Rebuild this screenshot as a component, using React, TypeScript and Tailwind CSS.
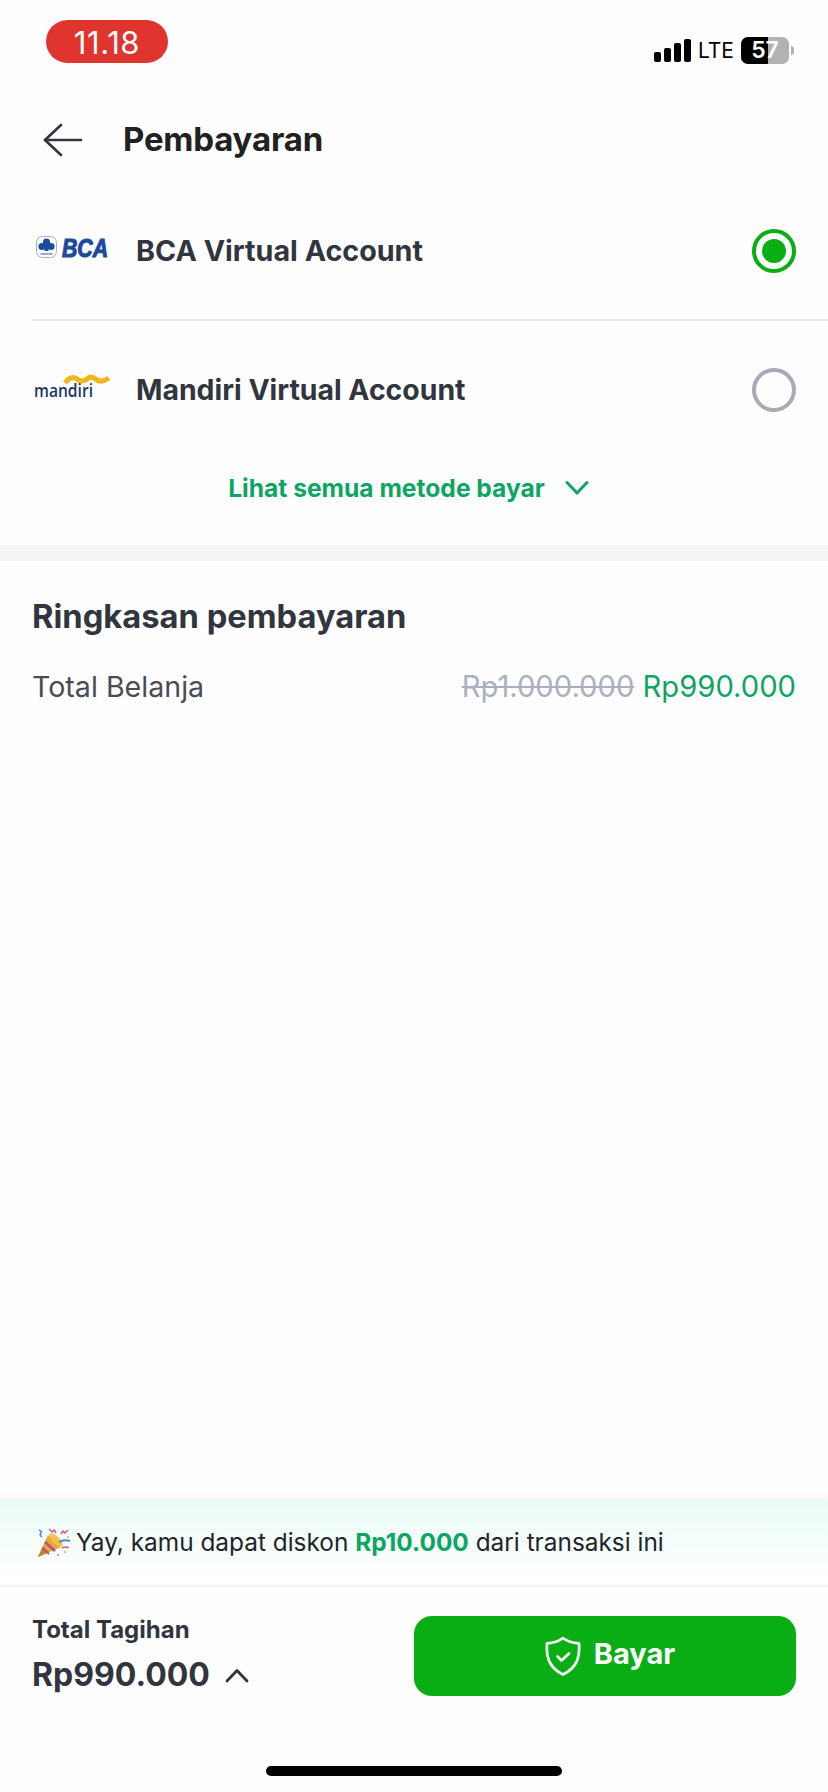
function BcaLogo() {
  return (
    <svg width="82" height="36" viewBox="0 0 82 36" className="block shrink-0">
      <g transform="translate(0 3)">
        <rect x="4.5" y="0.5" width="20" height="21" rx="6" fill="#fff" stroke="#9fb0d2" strokeWidth="1" />
        <circle cx="14.5" cy="6" r="3.6" fill="#1c4a9c" />
        <circle cx="10" cy="10.5" r="3.6" fill="#1c4a9c" />
        <circle cx="19" cy="10.5" r="3.6" fill="#1c4a9c" />
        <rect x="12.5" y="8" width="4" height="7" fill="#1c4a9c" />
        <rect x="8.5" y="17" width="12" height="1.8" fill="#8ea3c9" />
      </g>
      <text transform="translate(30 24) scale(0.85 1)" fontFamily="'Liberation Sans', sans-serif" fontSize="25" fontWeight="700" fontStyle="italic" fill="#1c4a9c" stroke="#1c4a9c" strokeWidth="1.1">BCA</text>
    </svg>
  );
}

function MandiriLogo() {
  return (
    <svg width="78" height="36" viewBox="0 0 78 36" className="block shrink-0">
      <path d="M33 11 Q39 3 45 7 Q50 11 55 7 Q60 3 65 8 Q70 11 77 6" fill="none" stroke="#f5b51c" strokeWidth="5" />
      <text x="2" y="25" fontFamily="'Open Sans', sans-serif" fontSize="18" fontWeight="600" fill="#1a3668" textLength="59" lengthAdjust="spacingAndGlyphs">mandiri</text>
    </svg>
  );
}

function PartyPopper() {
  return (
    <svg width="34" height="32" viewBox="0 0 34 32" className="block shrink-0">
      <path d="M1 30 L11 8 L24 20 Z" fill="#e8a92c" />
      <path d="M1 30 L6 19 L12 25 Z" fill="#c9821f" />
      <path d="M8 15 L18 24" stroke="#b04fa0" strokeWidth="2.5" />
      <path d="M5 21 L12 27" stroke="#b04fa0" strokeWidth="2" />
      <ellipse cx="19" cy="13" rx="3.5" ry="9" transform="rotate(-45 19 13)" fill="#f2c14e" />
      <path d="M2 3 q3 1 2 3 q-2 2 1 4" fill="none" stroke="#4a86d8" strokeWidth="1.5" />
      <path d="M12 2 l3 3 l2 -2 l2 3" fill="none" stroke="#c45aa8" strokeWidth="1.5" />
      <path d="M24 7 l2 -3 l2 2 l3 -3" fill="none" stroke="#d85a78" strokeWidth="1.5" />
      <path d="M22 15 q5 -3 11 -1" fill="none" stroke="#4a86d8" strokeWidth="2" />
      <path d="M25 21 q4 -2 7 0" fill="none" stroke="#c45aa8" strokeWidth="1.5" />
      <circle cx="28" cy="25" r="1" fill="#e8a92c" />
      <circle cx="21" cy="28" r="1" fill="#e07aa0" />
      <circle cx="31" cy="10" r="1" fill="#e8a92c" />
    </svg>
  );
}

function ShieldCheck() {
  return (
    <svg width="38" height="40" viewBox="0 0 38 40" fill="none" stroke="#f2fbf2" strokeWidth="2.8" strokeLinecap="round" strokeLinejoin="round" className="block shrink-0">
      <path d="M19 2 C24 6 29 7 35 7.5 C36 20 34 31 19 38.5 C4 31 2 20 3 7.5 C9 7 14 6 19 2 Z" />
      <path d="M13.5 20.5 L17.5 24.5 L25 17.5" />
    </svg>
  );
}

function BackArrow() {
  return (
    <svg width="40" height="34" viewBox="0 0 40 34" fill="none" stroke="#31353e" strokeWidth="2.6" strokeLinecap="round" strokeLinejoin="round" className="block shrink-0">
      <path d="M2 17 H38" />
      <path d="M18 2 L2 17 L18 32" />
    </svg>
  );
}

function StatusBar() {
  return (
    <div className="flex h-[85px] items-start justify-between pl-[46px] pr-[34px] pt-5">
      <div className="flex h-[43px] w-[122px] items-center justify-center rounded-full bg-[#e0352f] pt-[3px] text-[31px] tracking-[0.6px] text-white">11.18</div>
      <div className="mt-[17px] flex items-center">
        <div className="flex items-end gap-[3px]">
          <span className="h-[10px] w-[7px] rounded-[2px] bg-black" />
          <span className="h-[14px] w-[7px] rounded-[2px] bg-black" />
          <span className="h-[19px] w-[7px] rounded-[2px] bg-black" />
          <span className="h-[23px] w-[7px] rounded-[2px] bg-black" />
        </div>
        <span className="ml-[7px] text-[21px] leading-none text-black">LTE</span>
        <div className="relative ml-[7px] flex h-[27px] w-[48px] items-center justify-center overflow-hidden rounded-[7px] bg-[#b2b2b2] text-[23px] font-semibold text-white">
          <span className="absolute inset-y-0 left-0 w-[27px] bg-black" />
          <span className="relative">57</span>
        </div>
        <span className="ml-[2px] h-[9px] w-[3px] rounded-r-full bg-[#b2b2b2]" />
      </div>
    </div>
  );
}

export default function App() {
  return (
    <div className="flex h-[1792px] w-[828px] flex-col overflow-hidden bg-[#fefefe] font-['Inter',sans-serif] text-[#31353e]">
      <StatusBar />

      {/* Header */}
      <div className="mt-[20px] flex h-[70px] items-center pl-[43px]">
        <BackArrow />
        <h1 className="ml-[40px] text-[33px] font-bold tracking-[-0.2px] text-[#212121]">Pembayaran</h1>
      </div>

      {/* Payment methods */}
      <div>
        <div className="ml-8 flex h-[146px] items-center border-b-2 border-[#e8e9ec] pr-8 pt-2">
          <BcaLogo />
          <span className="ml-[22px] flex-1 text-[28.7px] font-bold">BCA Virtual Account</span>
          <span className="flex h-[44px] w-[44px] items-center justify-center rounded-full border-[4px] border-[#09ad14]">
            <span className="h-[24px] w-[24px] rounded-full bg-[#09ad14]" />
          </span>
        </div>
        <div className="ml-8 flex h-[138px] items-center pr-8">
          <MandiriLogo />
          <span className="ml-[26px] flex-1 text-[28.4px] font-bold">Mandiri Virtual Account</span>
          <span className="h-[44px] w-[44px] rounded-full border-[4px] border-[#a8abb5]" />
        </div>
        <div className="mt-[13px] flex h-[32px] items-center justify-center gap-[20px] pr-[11px] text-[#0ca662]">
          <span className="text-[24.6px] font-bold">Lihat semua metode bayar</span>
          <svg width="24" height="16" viewBox="0 0 24 16" fill="none" stroke="#0ca662" strokeWidth="3" strokeLinecap="round" strokeLinejoin="round" className="block shrink-0">
            <path d="M2 2.5 L12 13 L22 2.5" />
          </svg>
        </div>
      </div>

      <div className="mt-[41px] h-[16px] shrink-0 bg-[#f4f5f7]" />

      {/* Summary */}
      <div className="px-8 pt-[36px]">
        <h2 className="text-[32.7px] font-bold leading-[38px]">Ringkasan pembayaran</h2>
        <div className="mt-[33px] flex items-center justify-between text-[29.2px] leading-[38px]">
          <span className="text-[28.6px] text-[#474c56]">Total Belanja</span>
          <span>
            <span className="text-[#aab0c0] line-through">Rp1.000.000</span>{" "}
            <span className="text-[#0ca662]">Rp990.000</span>
          </span>
        </div>
      </div>

      <div className="flex-1" />

      {/* Discount banner */}
      <div className="flex h-[87px] items-center gap-[5px] border-b-2 border-[#f0f1f3] bg-gradient-to-b from-[#eafcf6] to-white pl-[37px] shadow-[0_-3px_6px_rgba(0,0,0,0.03)]">
        <PartyPopper />
        <p className="text-[24.4px] text-[#212529]">
          Yay, kamu dapat diskon <span className="font-bold text-[#0ca662]">Rp10.000</span> dari transaksi ini
        </p>
      </div>

      {/* Footer */}
      <div className="flex h-[138px] items-center justify-between px-8">
        <div>
          <div className="text-[24px] font-bold leading-[30px]">Total Tagihan</div>
          <div className="mt-[8px] flex items-center gap-[15px] text-[32px] font-bold leading-[44px]">
            Rp990.000
            <svg width="24" height="15" viewBox="0 0 24 15" fill="none" stroke="#31353e" strokeWidth="2.8" strokeLinecap="round" strokeLinejoin="round" className="block shrink-0">
              <path d="M2 13 L12 2.5 L22 13" />
            </svg>
          </div>
        </div>
        <button className="flex h-[80px] w-[382px] items-center justify-center gap-[12px] rounded-[18px] bg-[#09ad14] pl-[9px] text-[29px] font-bold text-white">
          <ShieldCheck />
          <span className="-mt-[4px]">Bayar</span>
        </button>
      </div>

      {/* Home indicator */}
      <div className="flex h-[67px] justify-center pt-[41px]">
        <span className="h-[10px] w-[296px] rounded-full bg-black" />
      </div>
    </div>
  );
}
